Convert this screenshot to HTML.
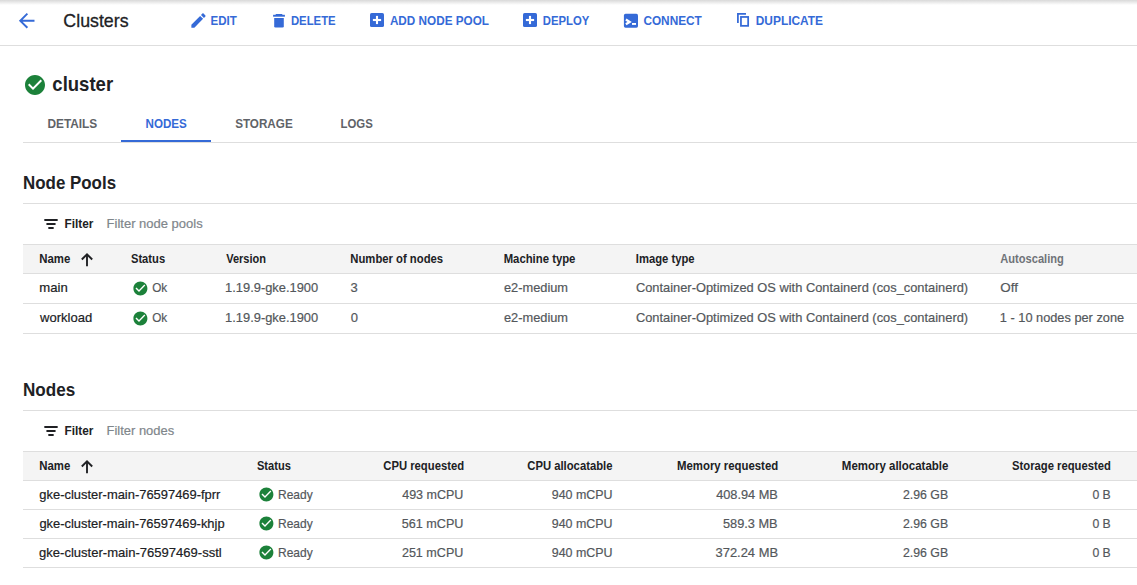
<!DOCTYPE html>
<html><head><meta charset="utf-8"><style>
html,body{margin:0;padding:0;background:#fff;width:1137px;height:585px;overflow:hidden;position:relative}
.t{position:absolute;white-space:nowrap;font-family:"Liberation Sans",sans-serif}
.r{position:absolute}
.i{position:absolute;overflow:visible}
</style></head><body>
<div class="r" style="left:0;top:0;width:1137px;height:5px;background:linear-gradient(#d9d9d9,#ffffff)"></div><div class="r" style="left:0px;top:45px;width:1137px;height:1px;background:#dedede"></div><div class="r" style="left:23px;top:142px;width:1114px;height:1px;background:#dedede"></div><div class="r" style="left:121px;top:140px;width:90px;height:2px;background:#356ad7"></div><div class="r" style="left:23px;top:203px;width:1114px;height:1px;background:#dedede"></div><div class="r" style="left:23px;top:410px;width:1114px;height:1px;background:#dedede"></div><div class="r" style="left:23px;top:244px;width:1114px;height:29px;background:#f4f4f4"></div><div class="r" style="left:23px;top:244px;width:1114px;height:1px;background:#dedede"></div><div class="r" style="left:23px;top:273px;width:1114px;height:1px;background:#dedede"></div><div class="r" style="left:23px;top:303px;width:1114px;height:1px;background:#dedede"></div><div class="r" style="left:23px;top:333px;width:1114px;height:1px;background:#dedede"></div><div class="r" style="left:23px;top:451px;width:1114px;height:29px;background:#f4f4f4"></div><div class="r" style="left:23px;top:451px;width:1114px;height:1px;background:#dedede"></div><div class="r" style="left:23px;top:480px;width:1114px;height:1px;background:#dedede"></div><div class="r" style="left:23px;top:509px;width:1114px;height:1px;background:#dedede"></div><div class="r" style="left:23px;top:538px;width:1114px;height:1px;background:#dedede"></div><div class="r" style="left:23px;top:567px;width:1114px;height:1px;background:#dedede"></div>
<svg class="i" style="left:15.0px;top:8.8px" width="23.4" height="23.4" viewBox="0 0 24 24"><path fill="#356ad7" d="M20 11H7.83l5.59-5.59L12 4l-8 8 8 8 1.41-1.41L7.83 13H20v-2z"/></svg><svg class="i" style="left:189.1px;top:10.9px" width="19" height="19" viewBox="0 0 24 24"><path fill="#356ad7" d="M3 17.25V21h3.75L17.81 9.94l-3.75-3.75L3 17.25zM20.71 7.04c.39-.39.39-1.02 0-1.41l-2.34-2.34c-.39-.39-1.02-.39-1.41 0l-1.83 1.83 3.75 3.75 1.83-1.83z"/></svg><svg class="i" style="left:270px;top:12px" width="18" height="18" viewBox="0 0 18 18"><rect x="5.6" y="2.1" width="6.8" height="1.4" rx="0.5" fill="#356ad7"/><rect x="3.1" y="2.8" width="11.8" height="1.9" fill="#356ad7"/><path d="M4.2 6.1 H13.8 V14.3 Q13.8 15.6 12.5 15.6 H5.5 Q4.2 15.6 4.2 14.3 Z" fill="#356ad7"/></svg><svg class="i" style="left:370px;top:13px" width="14" height="14" viewBox="0 0 14 14"><rect x="0" y="0" width="14" height="14" rx="1.6" fill="#356ad7"/><rect x="5.95" y="2.9" width="2.1" height="8.2" fill="#fff"/><rect x="2.9" y="5.95" width="8.2" height="2.1" fill="#fff"/></svg><svg class="i" style="left:523px;top:13px" width="14" height="14" viewBox="0 0 14 14"><rect x="0" y="0" width="14" height="14" rx="1.6" fill="#356ad7"/><rect x="5.95" y="2.9" width="2.1" height="8.2" fill="#fff"/><rect x="2.9" y="5.95" width="8.2" height="2.1" fill="#fff"/></svg><svg class="i" style="left:623px;top:13px" width="16" height="16" viewBox="0 0 16 16"><rect x="0.9" y="0.8" width="14.1" height="13.9" rx="1.6" fill="#356ad7"/><path d="M2.9 6.6 L6.6 8.9 L2.9 11.2" stroke="#fff" stroke-width="2.3" fill="none" stroke-linejoin="miter"/><rect x="9" y="10" width="4" height="1.9" fill="#fff"/></svg><svg class="i" style="left:736px;top:12px" width="14" height="16" viewBox="0 0 14 16"><path d="M1.9 10.0 V1.9 H9.1" stroke="#356ad7" stroke-width="1.75" fill="none" stroke-linecap="square"/><rect x="4.95" y="4.95" width="7.2" height="8.9" stroke="#356ad7" stroke-width="1.75" fill="none"/></svg><svg class="i" style="left:23px;top:72.85px" width="24" height="24" viewBox="0 0 24 24"><path fill="#1c813a" d="M12 2C6.48 2 2 6.48 2 12s4.48 10 10 10 10-4.48 10-10S17.52 2 12 2zm-2 15l-5-5 1.41-1.41L10 14.17l7.59-7.59L19 8l-9 9z"/></svg><svg class="i" style="left:40px;top:213px" width="22" height="22" viewBox="0 0 22 22"><g stroke="#202124" stroke-width="1.8" stroke-linecap="round"><line x1="5" y1="7" x2="17" y2="7"/><line x1="7.1" y1="11" x2="14.9" y2="11"/><line x1="9" y1="15" x2="13" y2="15"/></g></svg><svg class="i" style="left:76px;top:248.6px" width="22" height="22" viewBox="0 0 22 22"><g stroke="#202124" stroke-width="1.9" fill="none"><line x1="11" y1="5.5" x2="11" y2="17.2"/><path d="M5.8 10.5 L11 5.3 L16.2 10.5"/></g></svg><svg class="i" style="left:40px;top:420px" width="22" height="22" viewBox="0 0 22 22"><g stroke="#202124" stroke-width="1.8" stroke-linecap="round"><line x1="5" y1="7" x2="17" y2="7"/><line x1="7.1" y1="11" x2="14.9" y2="11"/><line x1="9" y1="15" x2="13" y2="15"/></g></svg><svg class="i" style="left:76px;top:455.6px" width="22" height="22" viewBox="0 0 22 22"><g stroke="#202124" stroke-width="1.9" fill="none"><line x1="11" y1="5.5" x2="11" y2="17.2"/><path d="M5.8 10.5 L11 5.3 L16.2 10.5"/></g></svg><svg class="i" style="left:132.15px;top:279.8px" width="16.8" height="16.8" viewBox="0 0 24 24"><path fill="#1c813a" d="M12 2C6.48 2 2 6.48 2 12s4.48 10 10 10 10-4.48 10-10S17.52 2 12 2zm-2 15l-5-5 1.41-1.41L10 14.17l7.59-7.59L19 8l-9 9z"/></svg><svg class="i" style="left:132.15px;top:309.8px" width="16.8" height="16.8" viewBox="0 0 24 24"><path fill="#1c813a" d="M12 2C6.48 2 2 6.48 2 12s4.48 10 10 10 10-4.48 10-10S17.52 2 12 2zm-2 15l-5-5 1.41-1.41L10 14.17l7.59-7.59L19 8l-9 9z"/></svg><svg class="i" style="left:258.1px;top:486.20000000000005px" width="16.8" height="16.8" viewBox="0 0 24 24"><path fill="#1c813a" d="M12 2C6.48 2 2 6.48 2 12s4.48 10 10 10 10-4.48 10-10S17.52 2 12 2zm-2 15l-5-5 1.41-1.41L10 14.17l7.59-7.59L19 8l-9 9z"/></svg><svg class="i" style="left:258.1px;top:515.2px" width="16.8" height="16.8" viewBox="0 0 24 24"><path fill="#1c813a" d="M12 2C6.48 2 2 6.48 2 12s4.48 10 10 10 10-4.48 10-10S17.52 2 12 2zm-2 15l-5-5 1.41-1.41L10 14.17l7.59-7.59L19 8l-9 9z"/></svg><svg class="i" style="left:258.1px;top:544.2px" width="16.8" height="16.8" viewBox="0 0 24 24"><path fill="#1c813a" d="M12 2C6.48 2 2 6.48 2 12s4.48 10 10 10 10-4.48 10-10S17.52 2 12 2zm-2 15l-5-5 1.41-1.41L10 14.17l7.59-7.59L19 8l-9 9z"/></svg>
<div class="t" id="clusters" style="top:11px;font-size:19px;line-height:19px;font-weight:400;color:#202124;left:63px;transform-origin:0 50%;transform:translateX(0.37px) scaleX(0.9355);-webkit-text-stroke:0.3px #202124;">Clusters</div><div class="t" id="edit" style="top:14px;font-size:13px;line-height:13px;font-weight:700;color:#356ad7;left:210px;transform-origin:0 50%;transform:translateX(0.60px) scaleX(0.8866);">EDIT</div><div class="t" id="delete" style="top:14px;font-size:13px;line-height:13px;font-weight:700;color:#356ad7;left:290px;transform-origin:0 50%;transform:translateX(0.88px) scaleX(0.8736);">DELETE</div><div class="t" id="addnp" style="top:14px;font-size:13px;line-height:13px;font-weight:700;color:#356ad7;left:389px;transform-origin:0 50%;transform:translateX(0.89px) scaleX(0.9027);">ADD NODE POOL</div><div class="t" id="deploy" style="top:14px;font-size:13px;line-height:13px;font-weight:700;color:#356ad7;left:542px;transform-origin:0 50%;transform:translateX(0.77px) scaleX(0.8696);">DEPLOY</div><div class="t" id="connect" style="top:14px;font-size:13px;line-height:13px;font-weight:700;color:#356ad7;left:643px;transform-origin:0 50%;transform:translateX(0.38px) scaleX(0.9093);">CONNECT</div><div class="t" id="dup" style="top:14px;font-size:13px;line-height:13px;font-weight:700;color:#356ad7;left:755px;transform-origin:0 50%;transform:translateX(0.77px) scaleX(0.9160);">DUPLICATE</div><div class="t" id="cluster" style="top:73px;font-size:21px;line-height:21px;font-weight:700;color:#202124;left:52px;transform-origin:0 50%;transform:translateX(0.34px) scaleX(0.8823);">cluster</div><div class="t" id="tab1" style="top:118px;font-size:12px;line-height:12px;font-weight:700;color:#5f6368;left:47px;transform-origin:0 50%;transform:translateX(0.42px) scaleX(0.9878);">DETAILS</div><div class="t" id="tab2" style="top:118px;font-size:12px;line-height:12px;font-weight:700;color:#356ad7;left:145px;transform-origin:0 50%;transform:translateX(0.56px) scaleX(0.9675);">NODES</div><div class="t" id="tab3" style="top:118px;font-size:12px;line-height:12px;font-weight:700;color:#5f6368;left:235px;transform-origin:0 50%;transform:translateX(0.14px) scaleX(0.9733);">STORAGE</div><div class="t" id="tab4" style="top:118px;font-size:12px;line-height:12px;font-weight:700;color:#5f6368;left:340px;transform-origin:0 50%;transform:translateX(0.48px) scaleX(0.9494);">LOGS</div><div class="t" id="np_title" style="top:174px;font-size:18px;line-height:18px;font-weight:700;color:#202124;left:23px;transform-origin:0 50%;transform:translateX(0.01px) scaleX(0.9398);">Node Pools</div><div class="t" id="np_filter" style="top:217px;font-size:13px;line-height:13px;font-weight:700;color:#202124;left:64px;transform-origin:0 50%;transform:translateX(0.52px) scaleX(0.9088);">Filter</div><div class="t" id="np_ph" style="top:217px;font-size:13px;line-height:13px;font-weight:400;color:#80868b;left:106px;transform-origin:0 50%;transform:translateX(0.57px);-webkit-text-stroke:0.2px #80868b;">Filter node pools</div><div class="t" id="nd_title" style="top:381px;font-size:18px;line-height:18px;font-weight:700;color:#202124;left:22px;transform-origin:0 50%;transform:translateX(0.97px) scaleX(0.9491);">Nodes</div><div class="t" id="nd_filter" style="top:424px;font-size:13px;line-height:13px;font-weight:700;color:#202124;left:64px;transform-origin:0 50%;transform:translateX(0.52px) scaleX(0.9088);">Filter</div><div class="t" id="nd_ph" style="top:424px;font-size:13px;line-height:13px;font-weight:400;color:#80868b;left:106px;transform-origin:0 50%;transform:translateX(0.57px) scaleX(0.9952);-webkit-text-stroke:0.2px #80868b;">Filter nodes</div><div class="t" id="nph_name" style="top:253px;font-size:12px;line-height:12px;font-weight:700;color:#202124;left:39px;transform-origin:0 50%;transform:translateX(0.17px) scaleX(0.9504);">Name</div><div class="t" id="nph_status" style="top:253px;font-size:12px;line-height:12px;font-weight:700;color:#202124;left:130px;transform-origin:0 50%;transform:translateX(0.94px) scaleX(0.9318);">Status</div><div class="t" id="nph_ver" style="top:253px;font-size:12px;line-height:12px;font-weight:700;color:#202124;left:226px;transform-origin:0 50%;transform:translateX(0.21px) scaleX(0.9171);">Version</div><div class="t" id="nph_num" style="top:253px;font-size:12px;line-height:12px;font-weight:700;color:#202124;left:350px;transform-origin:0 50%;transform:translateX(0.30px) scaleX(0.9405);">Number of nodes</div><div class="t" id="nph_mt" style="top:253px;font-size:12px;line-height:12px;font-weight:700;color:#202124;left:503px;transform-origin:0 50%;transform:translateX(0.64px) scaleX(0.9443);">Machine type</div><div class="t" id="nph_it" style="top:253px;font-size:12px;line-height:12px;font-weight:700;color:#202124;left:635px;transform-origin:0 50%;transform:translateX(0.78px) scaleX(0.9375);">Image type</div><div class="t" id="nph_auto" style="top:253px;font-size:12px;line-height:12px;font-weight:700;color:#6f7378;left:1000px;transform-origin:0 50%;transform:translateX(0.29px) scaleX(0.9249);">Autoscaling</div><div class="t" id="npr0_name" style="top:281px;font-size:13px;line-height:13px;font-weight:400;color:#202124;left:39px;transform-origin:0 50%;transform:translateX(0.30px) scaleX(1.0090);-webkit-text-stroke:0.2px #202124;">main</div><div class="t" id="npr0_ok" style="top:281px;font-size:13px;line-height:13px;font-weight:400;color:#53575b;left:152px;transform-origin:0 50%;transform:translateX(0.14px) scaleX(0.9034);-webkit-text-stroke:0.2px #53575b;">Ok</div><div class="t" id="npr0_ver" style="top:281px;font-size:13px;line-height:13px;font-weight:400;color:#53575b;left:225px;transform-origin:0 50%;transform:translateX(0.11px) scaleX(0.9903);-webkit-text-stroke:0.2px #53575b;">1.19.9-gke.1900</div><div class="t" id="npr0_num" style="top:281px;font-size:13px;line-height:13px;font-weight:400;color:#53575b;left:350px;transform-origin:0 50%;transform:translateX(0.40px);-webkit-text-stroke:0.2px #53575b;">3</div><div class="t" id="npr0_mt" style="top:281px;font-size:13px;line-height:13px;font-weight:400;color:#53575b;left:503px;transform-origin:0 50%;transform:translateX(0.97px) scaleX(0.9851);-webkit-text-stroke:0.2px #53575b;">e2-medium</div><div class="t" id="npr0_it" style="top:281px;font-size:13px;line-height:13px;font-weight:400;color:#53575b;left:635px;transform-origin:0 50%;transform:translateX(0.90px) scaleX(0.9887);-webkit-text-stroke:0.2px #53575b;">Container-Optimized OS with Containerd (cos_containerd)</div><div class="t" id="npr0_auto" style="top:281px;font-size:13px;line-height:13px;font-weight:400;color:#53575b;left:1000px;transform-origin:0 50%;transform:translateX(0.22px) scaleX(1.0309);-webkit-text-stroke:0.2px #53575b;">Off</div><div class="t" id="npr1_name" style="top:311px;font-size:13px;line-height:13px;font-weight:400;color:#202124;left:40px;transform-origin:0 50%;transform:scaleX(1.0033);-webkit-text-stroke:0.2px #202124;">workload</div><div class="t" id="npr1_ok" style="top:311px;font-size:13px;line-height:13px;font-weight:400;color:#53575b;left:152px;transform-origin:0 50%;transform:translateX(0.14px) scaleX(0.9034);-webkit-text-stroke:0.2px #53575b;">Ok</div><div class="t" id="npr1_ver" style="top:311px;font-size:13px;line-height:13px;font-weight:400;color:#53575b;left:225px;transform-origin:0 50%;transform:translateX(0.11px) scaleX(0.9903);-webkit-text-stroke:0.2px #53575b;">1.19.9-gke.1900</div><div class="t" id="npr1_num" style="top:311px;font-size:13px;line-height:13px;font-weight:400;color:#53575b;left:350px;transform-origin:0 50%;transform:translateX(0.63px);-webkit-text-stroke:0.2px #53575b;">0</div><div class="t" id="npr1_mt" style="top:311px;font-size:13px;line-height:13px;font-weight:400;color:#53575b;left:503px;transform-origin:0 50%;transform:translateX(0.97px) scaleX(0.9851);-webkit-text-stroke:0.2px #53575b;">e2-medium</div><div class="t" id="npr1_it" style="top:311px;font-size:13px;line-height:13px;font-weight:400;color:#53575b;left:635px;transform-origin:0 50%;transform:translateX(0.90px) scaleX(0.9887);-webkit-text-stroke:0.2px #53575b;">Container-Optimized OS with Containerd (cos_containerd)</div><div class="t" id="npr1_auto" style="top:311px;font-size:13px;line-height:13px;font-weight:400;color:#53575b;left:999px;transform-origin:0 50%;transform:translateX(0.82px) scaleX(0.9828);-webkit-text-stroke:0.2px #53575b;">1 - 10 nodes per zone</div><div class="t" id="ndh_name" style="top:460px;font-size:12px;line-height:12px;font-weight:700;color:#202124;left:39px;transform-origin:0 50%;transform:translateX(0.17px) scaleX(0.9504);">Name</div><div class="t" id="ndh_status" style="top:460px;font-size:12px;line-height:12px;font-weight:700;color:#202124;left:256px;transform-origin:0 50%;transform:translateX(0.95px) scaleX(0.9235);">Status</div><div class="t" id="ndh_cpur" style="top:460px;font-size:12px;line-height:12px;font-weight:700;color:#202124;right:672px;transform-origin:100% 50%;transform:translateX(-0.97px) scaleX(0.9385);">CPU requested</div><div class="t" id="ndh_cpua" style="top:460px;font-size:12px;line-height:12px;font-weight:700;color:#202124;right:524px;transform-origin:100% 50%;transform:translateX(-0.27px) scaleX(0.9384);">CPU allocatable</div><div class="t" id="ndh_memr" style="top:460px;font-size:12px;line-height:12px;font-weight:700;color:#202124;right:358px;transform-origin:100% 50%;transform:translateX(-0.53px) scaleX(0.9479);">Memory requested</div><div class="t" id="ndh_mema" style="top:460px;font-size:12px;line-height:12px;font-weight:700;color:#202124;right:189px;transform-origin:100% 50%;transform:translateX(-0.03px) scaleX(0.9564);">Memory allocatable</div><div class="t" id="ndh_stor" style="top:460px;font-size:12px;line-height:12px;font-weight:700;color:#202124;right:26px;transform-origin:100% 50%;transform:translateX(-0.61px) scaleX(0.9370);">Storage requested</div><div class="t" id="ndr0_name" style="top:488px;font-size:13px;line-height:13px;font-weight:400;color:#202124;left:39px;transform-origin:0 50%;transform:translateX(0.36px) scaleX(0.9943);-webkit-text-stroke:0.2px #202124;">gke-cluster-main-76597469-fprr</div><div class="t" id="ndr0_ready" style="top:488px;font-size:13px;line-height:13px;font-weight:400;color:#53575b;left:278px;transform-origin:0 50%;transform:translateX(0.04px) scaleX(0.9225);-webkit-text-stroke:0.2px #53575b;">Ready</div><div class="t" id="ndr0_cpu" style="top:488px;font-size:13px;line-height:13px;font-weight:400;color:#53575b;right:673px;transform-origin:100% 50%;transform:translateX(-0.23px) scaleX(0.9617);-webkit-text-stroke:0.2px #53575b;">493 mCPU</div><div class="t" id="ndr0_cpua" style="top:488px;font-size:13px;line-height:13px;font-weight:400;color:#53575b;right:524px;transform-origin:100% 50%;transform:translateX(-0.05px) scaleX(0.9565);-webkit-text-stroke:0.2px #53575b;">940 mCPU</div><div class="t" id="ndr0_mem" style="top:488px;font-size:13px;line-height:13px;font-weight:400;color:#53575b;right:359px;transform-origin:100% 50%;transform:translateX(-0.05px) scaleX(0.9813);-webkit-text-stroke:0.2px #53575b;">408.94 MB</div><div class="t" id="ndr0_mema" style="top:488px;font-size:13px;line-height:13px;font-weight:400;color:#53575b;right:188px;transform-origin:100% 50%;transform:translateX(-0.60px) scaleX(0.9471);-webkit-text-stroke:0.2px #53575b;">2.96 GB</div><div class="t" id="ndr0_stor" style="top:488px;font-size:13px;line-height:13px;font-weight:400;color:#53575b;right:25px;transform-origin:100% 50%;transform:translateX(-0.74px) scaleX(0.9405);-webkit-text-stroke:0.2px #53575b;">0 B</div><div class="t" id="ndr1_name" style="top:517px;font-size:13px;line-height:13px;font-weight:400;color:#202124;left:39px;transform-origin:0 50%;transform:translateX(0.38px) scaleX(0.9934);-webkit-text-stroke:0.2px #202124;">gke-cluster-main-76597469-khjp</div><div class="t" id="ndr1_ready" style="top:517px;font-size:13px;line-height:13px;font-weight:400;color:#53575b;left:278px;transform-origin:0 50%;transform:translateX(0.04px) scaleX(0.9225);-webkit-text-stroke:0.2px #53575b;">Ready</div><div class="t" id="ndr1_cpu" style="top:517px;font-size:13px;line-height:13px;font-weight:400;color:#53575b;right:673px;transform-origin:100% 50%;transform:translateX(-0.16px) scaleX(0.9705);-webkit-text-stroke:0.2px #53575b;">561 mCPU</div><div class="t" id="ndr1_cpua" style="top:517px;font-size:13px;line-height:13px;font-weight:400;color:#53575b;right:524px;transform-origin:100% 50%;transform:translateX(-0.05px) scaleX(0.9565);-webkit-text-stroke:0.2px #53575b;">940 mCPU</div><div class="t" id="ndr1_mem" style="top:517px;font-size:13px;line-height:13px;font-weight:400;color:#53575b;right:359px;transform-origin:100% 50%;transform:translateX(-0.02px) scaleX(0.9823);-webkit-text-stroke:0.2px #53575b;">589.3 MB</div><div class="t" id="ndr1_mema" style="top:517px;font-size:13px;line-height:13px;font-weight:400;color:#53575b;right:188px;transform-origin:100% 50%;transform:translateX(-0.60px) scaleX(0.9471);-webkit-text-stroke:0.2px #53575b;">2.96 GB</div><div class="t" id="ndr1_stor" style="top:517px;font-size:13px;line-height:13px;font-weight:400;color:#53575b;right:25px;transform-origin:100% 50%;transform:translateX(-0.74px) scaleX(0.9405);-webkit-text-stroke:0.2px #53575b;">0 B</div><div class="t" id="ndr2_name" style="top:546px;font-size:13px;line-height:13px;font-weight:400;color:#202124;left:39px;transform-origin:0 50%;transform:translateX(0.04px) scaleX(1.0033);-webkit-text-stroke:0.2px #202124;">gke-cluster-main-76597469-sstl</div><div class="t" id="ndr2_ready" style="top:546px;font-size:13px;line-height:13px;font-weight:400;color:#53575b;left:278px;transform-origin:0 50%;transform:translateX(0.04px) scaleX(0.9225);-webkit-text-stroke:0.2px #53575b;">Ready</div><div class="t" id="ndr2_cpu" style="top:546px;font-size:13px;line-height:13px;font-weight:400;color:#53575b;right:673px;transform-origin:100% 50%;transform:translateX(-0.25px) scaleX(0.9662);-webkit-text-stroke:0.2px #53575b;">251 mCPU</div><div class="t" id="ndr2_cpua" style="top:546px;font-size:13px;line-height:13px;font-weight:400;color:#53575b;right:524px;transform-origin:100% 50%;transform:translateX(-0.05px) scaleX(0.9565);-webkit-text-stroke:0.2px #53575b;">940 mCPU</div><div class="t" id="ndr2_mem" style="top:546px;font-size:13px;line-height:13px;font-weight:400;color:#53575b;right:358px;transform-origin:100% 50%;transform:translateX(-0.87px) scaleX(0.9932);-webkit-text-stroke:0.2px #53575b;">372.24 MB</div><div class="t" id="ndr2_mema" style="top:546px;font-size:13px;line-height:13px;font-weight:400;color:#53575b;right:188px;transform-origin:100% 50%;transform:translateX(-0.60px) scaleX(0.9471);-webkit-text-stroke:0.2px #53575b;">2.96 GB</div><div class="t" id="ndr2_stor" style="top:546px;font-size:13px;line-height:13px;font-weight:400;color:#53575b;right:25px;transform-origin:100% 50%;transform:translateX(-0.74px) scaleX(0.9405);-webkit-text-stroke:0.2px #53575b;">0 B</div>
</body></html>
